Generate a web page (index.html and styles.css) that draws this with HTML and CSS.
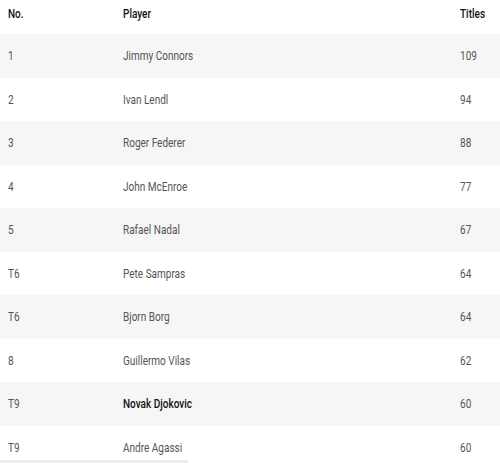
FILE: index.html
```html
<!DOCTYPE html>
<html>
<head>
<meta charset="utf-8">
<link rel="stylesheet" href="styles.css">
</head>
<body>
<table class="titles">
  <thead>
    <tr><th class="c-no"><span class="t">No.</span></th><th class="c-player"><span class="t">Player</span></th><th class="c-titles"><span class="t">Titles</span></th></tr>
  </thead>
  <tbody>
    <tr><td><span class="t">1</span></td><td><span class="t">Jimmy Connors</span></td><td><span class="t">109</span></td></tr>
    <tr><td><span class="t">2</span></td><td><span class="t">Ivan Lendl</span></td><td><span class="t">94</span></td></tr>
    <tr><td><span class="t">3</span></td><td><span class="t">Roger Federer</span></td><td><span class="t">88</span></td></tr>
    <tr><td><span class="t">4</span></td><td><span class="t">John McEnroe</span></td><td><span class="t">77</span></td></tr>
    <tr><td><span class="t">5</span></td><td><span class="t">Rafael Nadal</span></td><td><span class="t">67</span></td></tr>
    <tr><td><span class="t">T6</span></td><td><span class="t">Pete Sampras</span></td><td><span class="t">64</span></td></tr>
    <tr><td><span class="t">T6</span></td><td><span class="t">Bjorn Borg</span></td><td><span class="t">64</span></td></tr>
    <tr><td><span class="t">8</span></td><td><span class="t">Guillermo Vilas</span></td><td><span class="t">62</span></td></tr>
    <tr><td><span class="t">T9</span></td><td><strong class="t">Novak Djokovic</strong></td><td><span class="t">60</span></td></tr>
    <tr><td><span class="t">T9</span></td><td><span class="t">Andre Agassi</span></td><td><span class="t">60</span></td></tr>
  </tbody>
</table>
<div class="scroll-thumb"></div>
</body>
</html>
```
FILE: styles.css
```css
html, body {
  margin: 0;
  padding: 0;
  background: #ffffff;
  overflow: hidden;
  height: 463px;
}
body {
  font-family: Roboto, "Liberation Sans", sans-serif;
  font-size: 13px;
  color: #555555;
  position: relative;
}
.titles {
  width: 500px;
  border-collapse: collapse;
  table-layout: fixed;
}
.t {
  display: inline-block;
  transform: scaleX(0.77);
  transform-origin: left center;
  white-space: nowrap;
}
.titles th {
  text-align: left;
  font-weight: 500;
  color: #111111;
  height: 27px;
  padding: 0 0 7px 0;
  vertical-align: middle;
}
.titles td {
  height: 43.5px;
  padding: 0;
  vertical-align: middle;
  box-sizing: border-box;
}
.titles th:first-child,
.titles td:first-child {
  padding-left: 8px;
}
.titles tbody tr:nth-child(odd) {
  background: #f6f6f6;
}
.titles strong {
  color: #111111;
  font-weight: 500;
}
.c-no { width: 115px; }
.c-player { width: 337px; }
.c-titles { width: 40px; }
.scroll-thumb {
  position: absolute;
  left: 0;
  bottom: 0;
  width: 188px;
  height: 3px;
  background: #ededed;
}
```
